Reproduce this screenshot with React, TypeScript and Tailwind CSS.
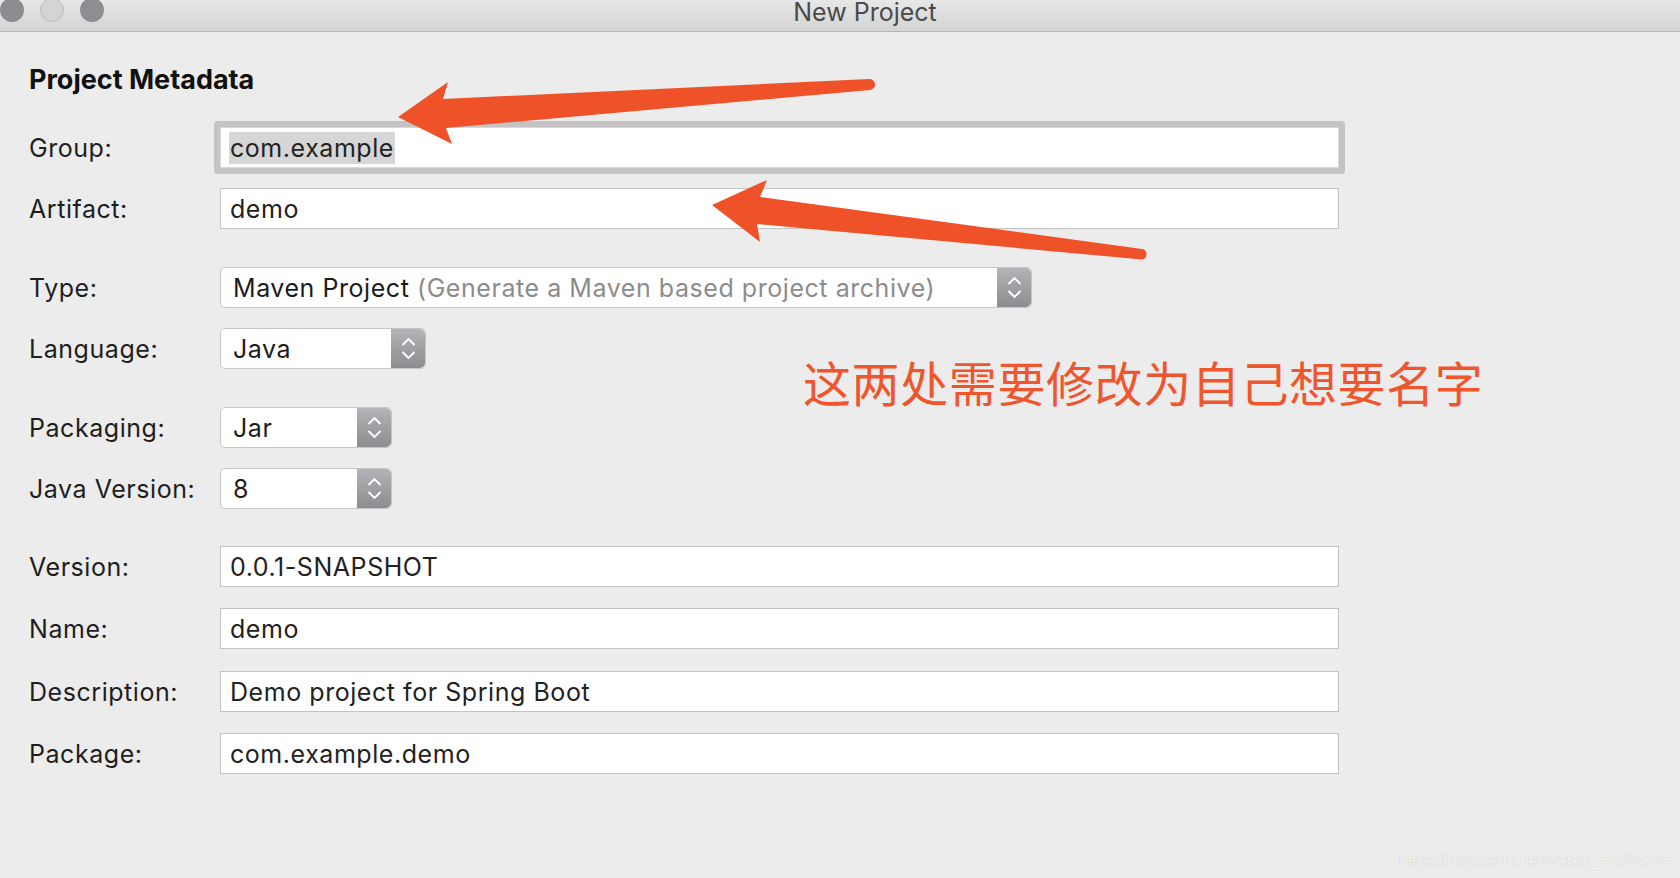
import React from "react";

const Stepper = () => (
  <div className="w-[34px] h-full shrink-0 bg-linear-to-b from-[#b3b3b8] to-[#8c8c91] rounded-r-[5px] flex flex-col items-center justify-center gap-[5px]">
    <svg width="15" height="9" viewBox="0 0 15 9">
      <path d="M1.5 8 L7.5 2 L13.5 8" fill="none" stroke="white" strokeWidth="1.9" />
    </svg>
    <svg width="15" height="9" viewBox="0 0 15 9">
      <path d="M1.5 1 L7.5 7 L13.5 1" fill="none" stroke="white" strokeWidth="1.9" />
    </svg>
  </div>
);

const Field = ({ children, ring }: { children: React.ReactNode; ring?: boolean }) => (
  <div
    className={
      "w-[1119px] h-[41px] bg-white border flex items-center pl-[9px] text-[#222] " +
      (ring ? "border-[#d9d9d9] rounded-[1px] shadow-[0_0_0_6px_#c4c4c4]" : "border-[#c3c3c3]")
    }
  >
    {children}
  </div>
);

const Select = ({ width, children }: { width: string; children: React.ReactNode }) => (
  <div className={"h-[41px] bg-white border border-[#c6c6c6] rounded-[5px] flex overflow-hidden " + width}>
    <div className="flex-1 flex items-center pl-[12px] text-[#1c1c1c] whitespace-nowrap">{children}</div>
    <Stepper />
  </div>
);

const Row = ({ label, mt, children }: { label: string; mt: string; children: React.ReactNode }) => (
  <div className={"flex items-center " + mt}>
    <div className="w-[191px] text-[#1e1e1e]">{label}</div>
    {children}
  </div>
);

export default function App() {
  return (
    <div className="relative w-full h-[878px] bg-[#ececec] overflow-hidden font-['Inter','Liberation_Sans',sans-serif] text-[25px] leading-[30px]">
      {/* title bar */}
      <div className="h-[32px] flex bg-linear-to-b from-[#e7e7e7] to-[#d4d4d4] border-b border-[#b6b6b6]">
        <div className="w-[104px] flex gap-[16px] -mt-[2px]">
          <div className="w-[24px] h-[24px] rounded-full bg-[#8d8d91]" />
          <div className="w-[24px] h-[24px] rounded-full bg-[#d4d4d4] border border-[#bdbdbd]" />
          <div className="w-[24px] h-[24px] rounded-full bg-[#8e8e92]" />
        </div>
        <div className="flex-1 flex justify-center pr-[54px] text-[#4a4a4a] text-[25px] leading-[26px] -mt-[1px]">New Project</div>
      </div>

      <div className="pl-[29px] flex flex-col tracking-[0.55px]">
        <div className="mt-[35px] font-bold text-[27px] leading-[26px] text-[#111] tracking-normal">Project Metadata</div>

        <Row label="Group:" mt="mt-[34px]">
          <Field ring>
            <span className="bg-[#d6d6d6] leading-[32px] px-[1px] -ml-[1px]">com.example</span>
          </Field>
        </Row>
        <Row label="Artifact:" mt="mt-[20px]">
          <Field>demo</Field>
        </Row>
        <Row label="Type:" mt="mt-[38px]">
          <Select width="w-[812px]">
            Maven Project&nbsp;<span className="text-[#8c8c8c]">(Generate a Maven based project archive)</span>
          </Select>
        </Row>
        <Row label="Language:" mt="mt-[20px]">
          <Select width="w-[206px]">Java</Select>
        </Row>
        <Row label="Packaging:" mt="mt-[38px]">
          <Select width="w-[172px]">Jar</Select>
        </Row>
        <Row label="Java Version:" mt="mt-[20px]">
          <Select width="w-[172px]">8</Select>
        </Row>
        <Row label="Version:" mt="mt-[37px]">
          <Field>0.0.1-SNAPSHOT</Field>
        </Row>
        <Row label="Name:" mt="mt-[21px]">
          <Field>demo</Field>
        </Row>
        <Row label="Description:" mt="mt-[22px]">
          <Field>Demo project for Spring Boot</Field>
        </Row>
        <Row label="Package:" mt="mt-[21px]">
          <Field>com.example.demo</Field>
        </Row>
      </div>

      {/* annotation */}
      <svg className="absolute left-0 top-0 pointer-events-none" width="1680" height="878" viewBox="0 0 1680 878">
        <path
          d="M398 117 L448 82 L443 99 L869 79 A5.5 5.5 0 0 1 870 90 L446 128 L452 144 Z"
          fill="#ef5229"
        />
        <path
          d="M712 205 L767 180 L760 197 L1142 249 A5.3 5.3 0 0 1 1142 259.5 L757 224 L760 242 Z"
          fill="#ef5229"
        />
      </svg>
      <div className="absolute left-[803px] top-[357px] text-[48px] leading-[48px] tracking-[0.6px] text-[#f0562d] font-['Noto_Sans_CJK_SC',sans-serif] whitespace-nowrap">
        这两处需要修改为自己想要名字
      </div>

      <div className="absolute left-[1399px] top-[853px] text-[16px] leading-[16px] text-[#f6f6f6] font-['Liberation_Sans',sans-serif] [text-shadow:0_0_1px_#b8b8b8]">
        https://blog.csdn.net/weixin_41564214
      </div>
    </div>
  );
}
